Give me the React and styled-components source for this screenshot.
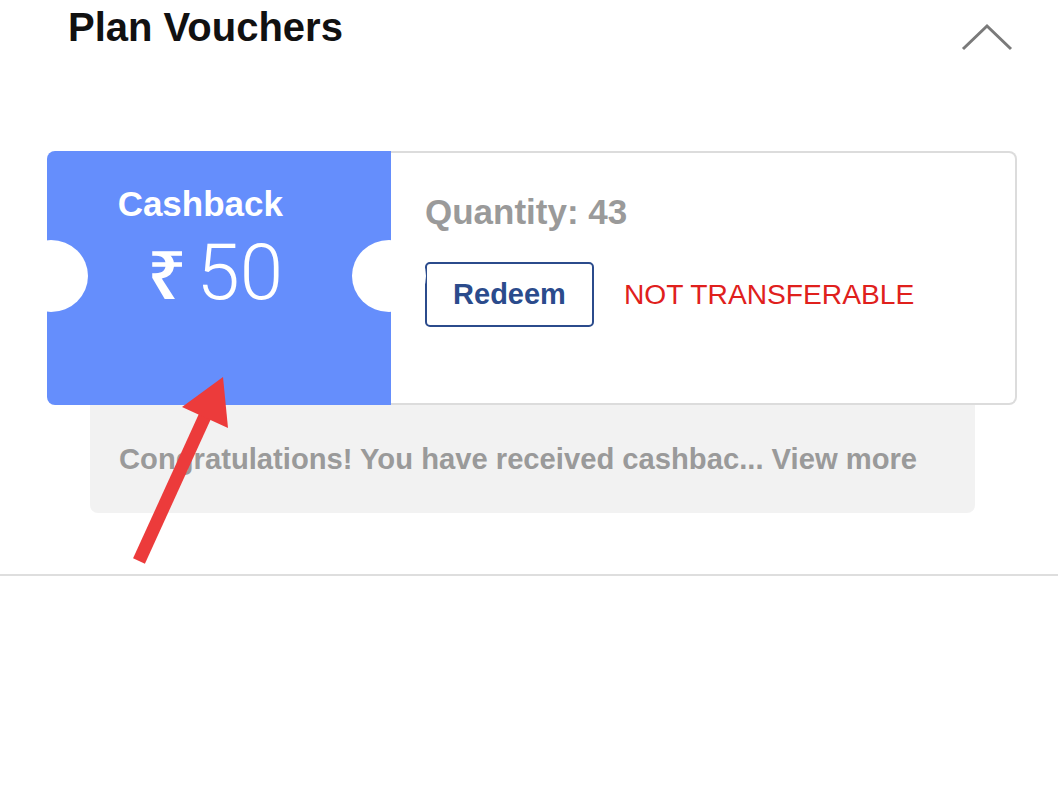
import React from 'react';
import styled, { createGlobalStyle } from 'styled-components';

const GlobalStyle = createGlobalStyle`
  html, body {
    margin: 0;
    padding: 0;
    background: #fff;
  }
  body {
    font-family: "Liberation Sans", Arial, sans-serif;
  }
`;

const Page = styled.div`
  position: relative;
  width: 1058px;
  height: 793px;
  overflow: hidden;
`;

const Header = styled.div`
  display: flex;
  justify-content: space-between;
  align-items: flex-start;
  height: 53px;
  padding: 3px 45px 0 68px;
  box-sizing: border-box;
`;

const Title = styled.h2`
  margin: 0;
  font-size: 40px;
  line-height: 48px;
  font-weight: 700;
  color: #111;
`;

const Chevron = styled.svg`
  margin-top: 20px;
`;

const Voucher = styled.div`
  display: flex;
  margin: 98px 41px 0 47px;
  height: 254px;
`;

const Ticket = styled.div`
  position: relative;
  width: 344px;
  flex-shrink: 0;
  background: #658efc;
  border-radius: 8px 0 0 8px;
  display: flex;
  flex-direction: column;
  align-items: flex-end;
  padding: 32px 108px 0 0;
  box-sizing: border-box;
  color: #fff;

  // the two punched notches
  &::before,
  &::after {
    content: '';
    position: absolute;
    top: 89px;
    width: 74px;
    height: 72px;
    border-radius: 50%;
    background: #fff;
  }
  &::before {
    left: -33px;
  }
  &::after {
    right: -35px;
  }
`;

const Label = styled.div`
  font-size: 35px;
  line-height: 42px;
  font-weight: 700;
`;

const Amount = styled.div`
  display: flex;
  align-items: baseline;
  margin-top: 5px;
  font-family: "Roboto", "Liberation Sans", sans-serif;
  font-weight: 300;
  font-size: 78px;
  line-height: 86px;
`;

const Rupee = styled.span`
  font-family: "Noto Sans", "DejaVu Sans", sans-serif;
  font-weight: 600;
  font-size: 68px;
  margin-right: 10px;
`;

const Details = styled.div`
  flex: 1;
  border: 2px solid #dcdcdc;
  border-left: none;
  border-radius: 0 8px 8px 0;
  padding: 39px 0 0 34px;
`;

const Quantity = styled.div`
  font-size: 35px;
  line-height: 40px;
  font-weight: 700;
  color: #9a9a9a;
`;

const Actions = styled.div`
  display: flex;
  align-items: center;
  gap: 30px;
  margin-top: 30px;
`;

const RedeemButton = styled.button`
  width: 169px;
  height: 65px;
  border: 2px solid #2b4b8c;
  border-radius: 5px;
  background: #fff;
  color: #2b4b8c;
  font-family: inherit;
  font-size: 29px;
  font-weight: 700;
  padding: 0;
`;

const Restriction = styled.span`
  font-size: 28.2px;
  color: #e0201c;
`;

const Note = styled.div`
  display: flex;
  align-items: center;
  margin: 0 83px 0 90px;
  height: 108px;
  padding-left: 29px;
  background: #f2f2f2;
  border-radius: 0 0 8px 8px;
  font-size: 29.2px;
  font-weight: 700;
  color: #9a9a9a;
`;

const Divider = styled.hr`
  margin: 61px 0 0;
  border: none;
  border-top: 2px solid #dedede;
`;

const Annotation = styled.svg`
  position: absolute;
  top: 0;
  left: 0;
  pointer-events: none;
`;

export default function App() {
  return (
    <Page>
      <GlobalStyle />
      <Header>
        <Title>Plan Vouchers</Title>
        <Chevron width="52" height="30" viewBox="0 0 52 30">
          <polyline
            points="2,26 26,3 50,26"
            fill="none"
            stroke="#7a7a7a"
            strokeWidth="3"
          />
        </Chevron>
      </Header>

      <Voucher>
        <Ticket>
          <Label>Cashback</Label>
          <Amount>
            <Rupee>₹</Rupee>50
          </Amount>
        </Ticket>
        <Details>
          <Quantity>Quantity: 43</Quantity>
          <Actions>
            <RedeemButton>Redeem</RedeemButton>
            <Restriction>NOT TRANSFERABLE</Restriction>
          </Actions>
        </Details>
      </Voucher>

      <Note>Congratulations! You have received cashbac... View more</Note>
      <Divider />

      <Annotation width="1058" height="793" viewBox="0 0 1058 793">
        <line
          x1="139"
          y1="561"
          x2="206"
          y2="414"
          stroke="#ec3b3b"
          strokeWidth="13"
        />
        <polygon points="223,377 228,428 182,407" fill="#ec3b3b" />
      </Annotation>
    </Page>
  );
}
